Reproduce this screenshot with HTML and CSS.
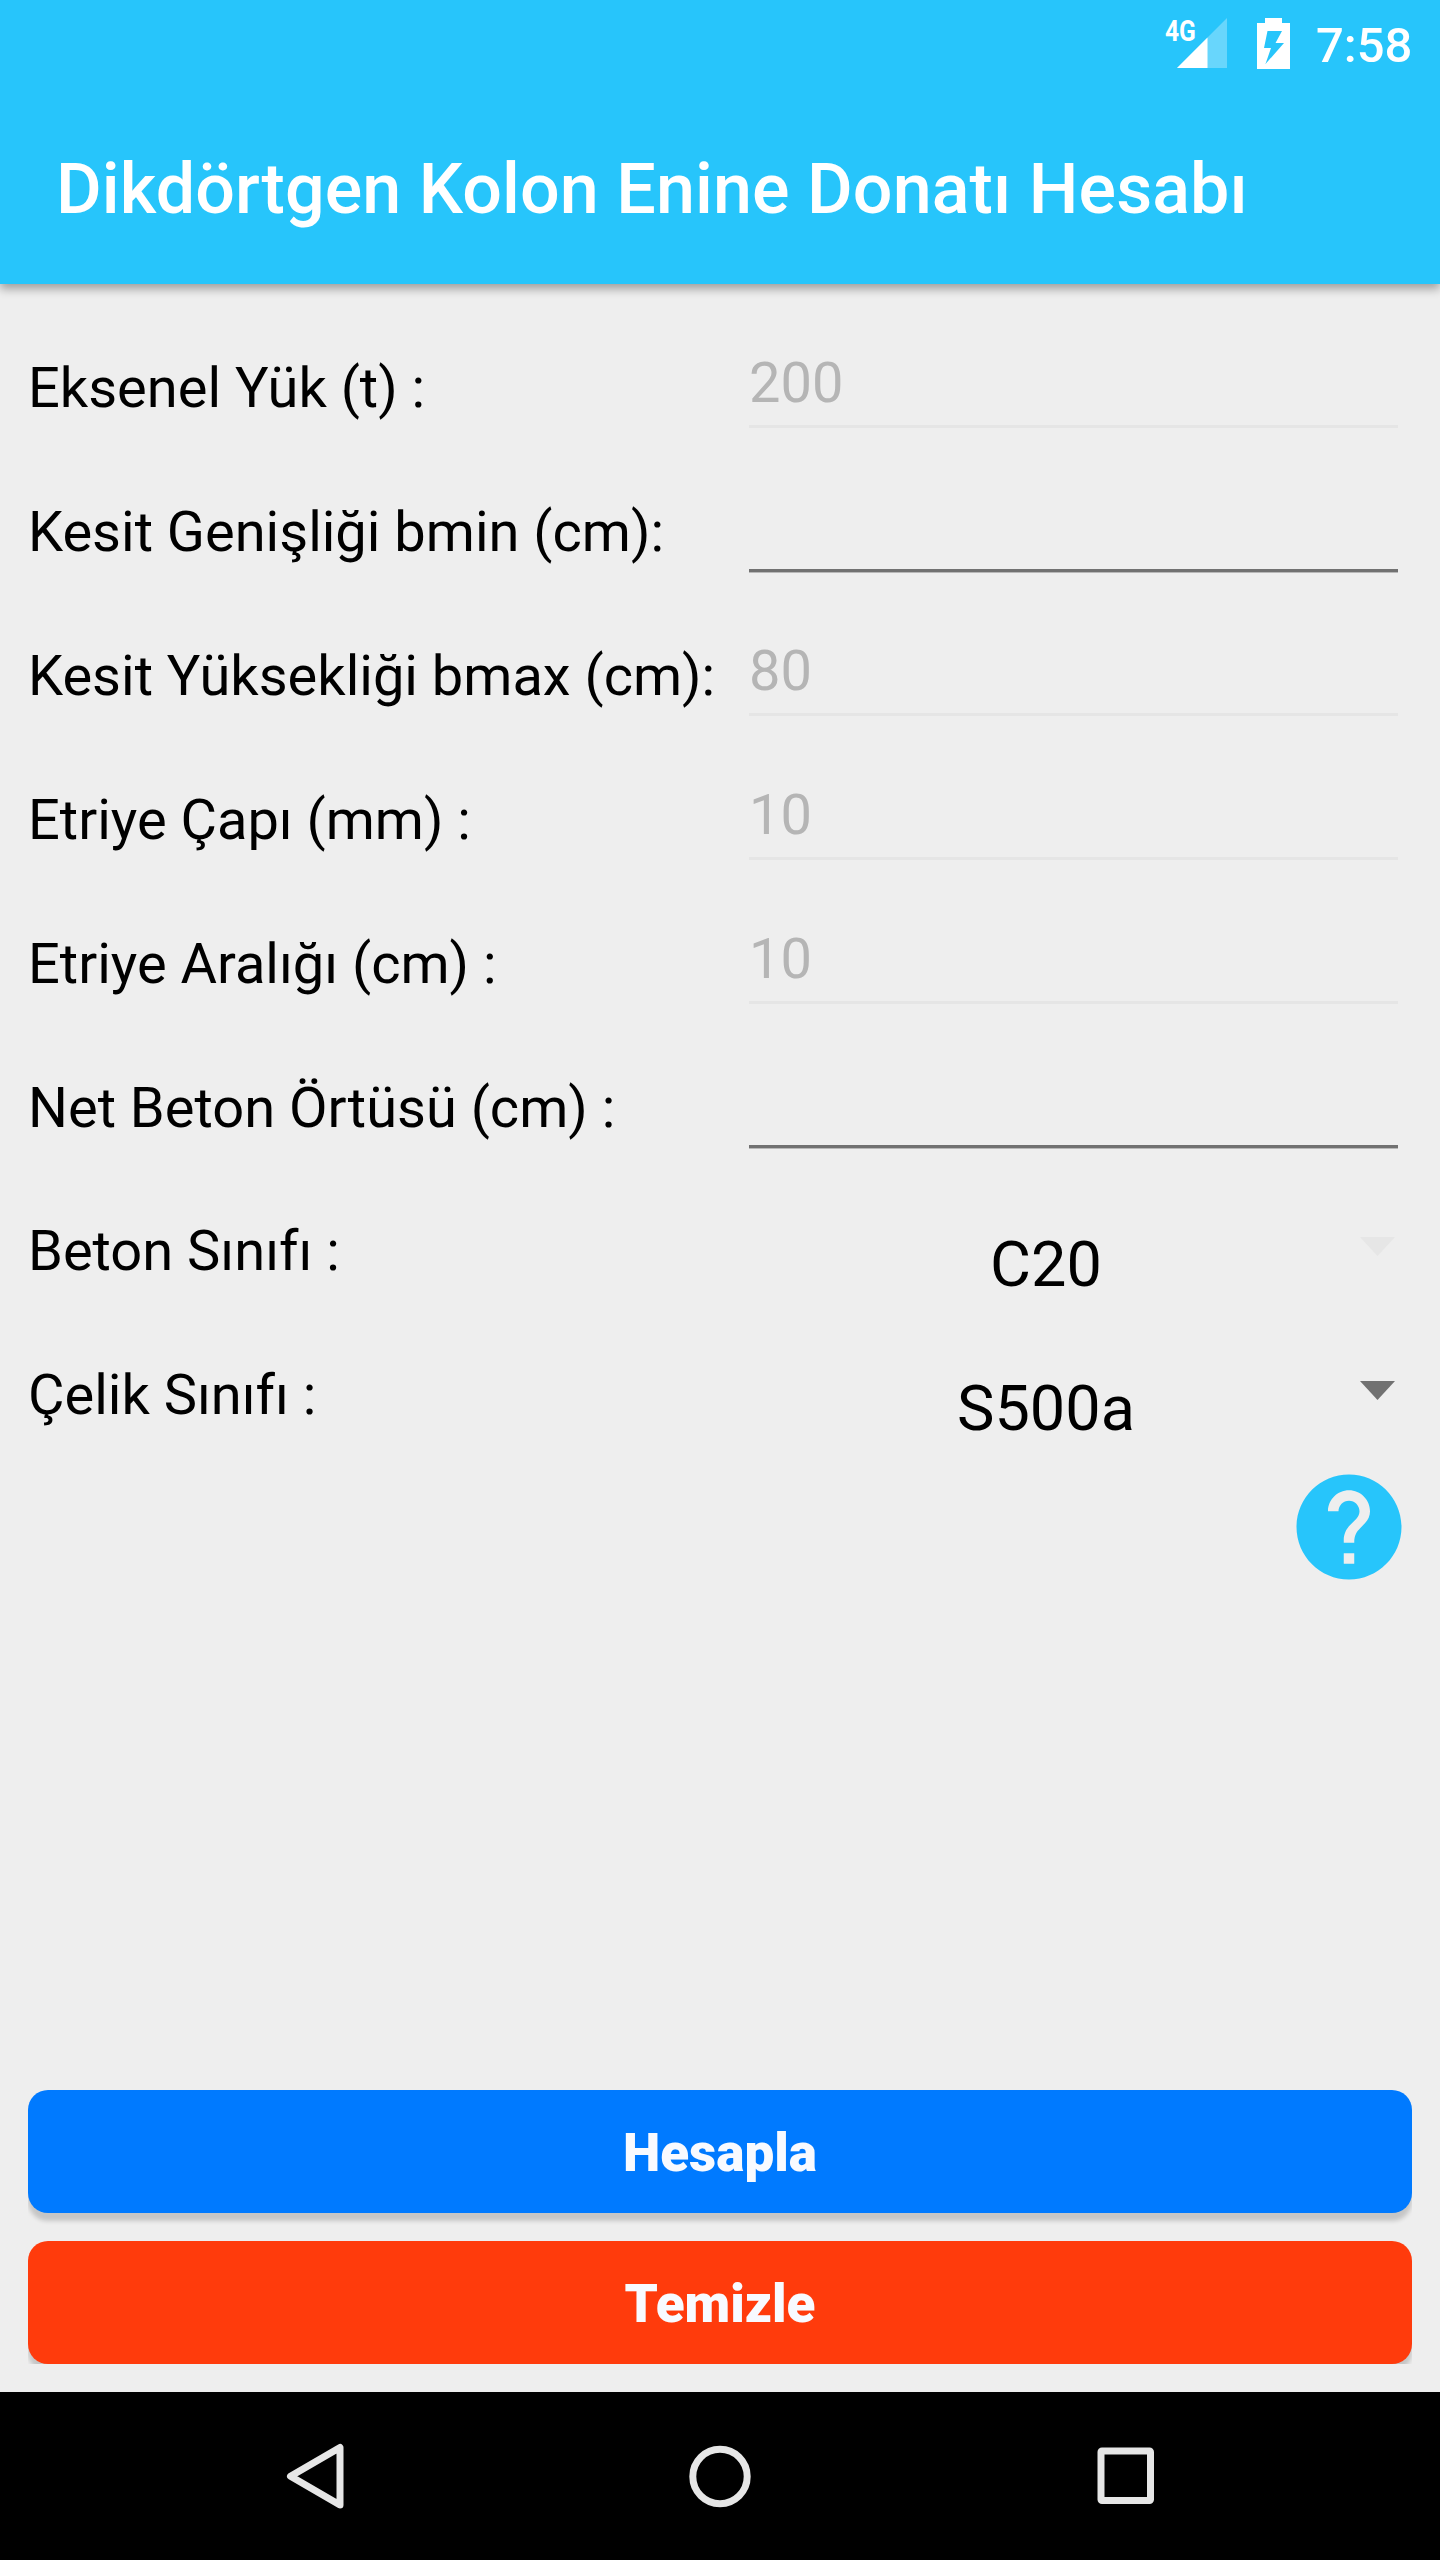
FILE: index.html
```html
<!DOCTYPE html>
<html lang="tr">
<head>
<meta charset="utf-8">
<title>Dikdörtgen Kolon Enine Donatı Hesabı</title>
<link rel="stylesheet" href="styles.css">
</head>
<body>
<div class="screen">
  <header class="header">
    <div class="status">
      <span class="network">4G</span>
      <svg class="signal" width="50" height="50" viewBox="0 0 50 50"><path d="M0 50L50 0V50Z" fill="#fff" fill-opacity=".3"/><path d="M0 50L30.500 19.500V50Z" fill="#fff"/></svg>
      <svg class="battery" width="33" height="51" viewBox="0 0 33 51"><path fill="#fff" fill-rule="evenodd" d="M8 0H25V5H33V51H0V5H8ZM10.500 13L7 30H14L8.500 46L27 25H18.500L25 13Z"/></svg>
      <span class="clock">7:58</span>
    </div>
    <h1 class="title">Dikdörtgen Kolon Enine Donatı Hesabı</h1>
  </header>
  <main class="content">
    <div class="row"><label class="label">Eksenel Yük (t) :</label><div class="field disabled">200</div></div>
    <div class="row"><label class="label">Kesit Genişliği bmin (cm):</label><div class="field"></div></div>
    <div class="row"><label class="label">Kesit Yüksekliği bmax (cm):</label><div class="field disabled">80</div></div>
    <div class="row"><label class="label">Etriye Çapı (mm) :</label><div class="field disabled">10</div></div>
    <div class="row"><label class="label">Etriye Aralığı (cm) :</label><div class="field disabled">10</div></div>
    <div class="row"><label class="label">Net Beton Örtüsü (cm) :</label><div class="field"></div></div>
    <div class="row select-row"><label class="label">Beton Sınıfı :</label><div class="select"><span class="value">C20</span><svg class="arrow faded" width="35" height="19" viewBox="0 0 35 19"><path d="M0 0H35L17.500 19Z"/></svg></div></div>
    <div class="row select-row"><label class="label">Çelik Sınıfı :</label><div class="select"><span class="value">S500a</span><svg class="arrow" width="35" height="19" viewBox="0 0 35 19"><path d="M0 0H35L17.500 19Z"/></svg></div></div>
    <svg class="help" width="126" height="126" viewBox="0 0 24 24"><path fill="#27c5fb" d="M12 2C6.480 2 2 6.480 2 12s4.480 10 10 10 10-4.480 10-10S17.520 2 12 2zm1 17h-2v-2h2v2zm2.070-7.750l-.9.920C13.450 12.900 13 13.500 13 15h-2v-.5c0-1.100.45-2.100 1.170-2.830l1.240-1.260c.37-.36.59-.86.59-1.410 0-1.100-.9-2-2-2s-2 .9-2 2H8c0-2.210 1.790-4 4-4s4 1.790 4 4c0 .88-.36 1.680-.93 2.250z"/></svg>
    <div class="actions">
      <div class="slot"><button class="button primary">Hesapla</button></div>
      <div class="slot clipped"><button class="button danger">Temizle</button></div>
    </div>
  </main>
  <nav class="nav">
    <svg width="66" height="66" viewBox="0 0 66 66"><path d="M59 4.500V62L9.500 33.250Z"/></svg>
    <svg width="66" height="66" viewBox="0 0 66 66"><circle cx="33" cy="33.500" r="27.200"/></svg>
    <svg width="66" height="66" viewBox="0 0 66 66"><rect x="8" y="8" width="49.500" height="49.500" rx="1"/></svg>
  </nav>
</div>
</body>
</html>
```
FILE: styles.css
```css
* { box-sizing: border-box; }

body {
  margin: 0;
  background: #eee;
  color: #000;
  font-family: Roboto, sans-serif;
}

.screen {
  display: flex;
  flex-direction: column;
  width: 1440px;
  height: 2560px;
  overflow: hidden;
}

.header {
  height: 284px;
  background: #27c5fb;
  color: #fff;
  box-shadow: 0 5px 9px rgba(0, 0, 0, .33);
}

.status {
  display: flex;
  align-items: flex-start;
  justify-content: flex-end;
  height: 84px;
  padding-right: 26px;
}

.network {
  width: 12px;
  margin-top: 16px;
  font-size: 30px;
  line-height: 30px;
  font-weight: 700;
  white-space: nowrap;
  transform: scaleX(.82);
  transform-origin: left;
}

.signal { margin-top: 18px; }

.battery { margin: 18px 0 0 30px; }

.clock {
  width: 98px;
  margin: 16px 0 0 26px;
  font-size: 49px;
  line-height: 60px;
  font-weight: 500;
}

.title {
  margin: 0;
  padding: 65px 0 0 56px;
  font-size: 70px;
  line-height: 80px;
  font-weight: 500;
  letter-spacing: .09px;
  white-space: nowrap;
}

.content {
  display: flex;
  flex-direction: column;
  flex: 1;
  padding: 31px 28px 28px;
}

.row {
  display: grid;
  grid-template-columns: 721px 649px;
  height: 144px;
}

.label {
  padding-top: 40px;
  font-size: 56px;
  line-height: 66px;
  white-space: nowrap;
}

.field {
  height: 113px;
  padding-top: 35px;
  border-bottom: 3px solid #717171;
  box-shadow: 0 1px #b8b8b8;
  font-size: 56px;
  line-height: 66px;
}

.field.disabled {
  border-bottom-color: #e5e5e5;
  box-shadow: none;
  color: #b5b5b5;
}

.select-row .label { padding-top: 39px; }

.select {
  display: flex;
  align-items: flex-start;
  justify-content: space-between;
  padding: 49px 3px 0 0;
}

.value {
  flex: 1;
  padding-right: 17px;
  font-size: 63px;
  line-height: 74px;
  text-align: center;
}

.arrow {
  margin-top: 9px;
  fill: #717171;
}

.arrow.faded { fill: #e6e6e6; }

.help {
  align-self: flex-end;
  margin: -3px 0 0;
}

.actions {
  display: flex;
  flex-direction: column;
  gap: 28px;
  margin-top: auto;
}

.slot {
  height: 123px;
  clip-path: inset(-4px 0 -14px);
}

.slot.clipped { clip-path: inset(-4px 0 0); }

.button {
  display: block;
  width: 100%;
  height: 123px;
  padding: 3px 0 0;
  border: 0;
  border-radius: 20px;
  color: #f8faff;
  font-family: Roboto, sans-serif;
  font-size: 53px;
  line-height: 62px;
  font-weight: 900;
  box-shadow: 0 8px 4px rgba(0, 0, 0, .17);
}

.primary { background: #007aff; }
.danger { background: #ff3b0c; }

.nav {
  display: flex;
  align-items: center;
  justify-content: center;
  gap: 340px;
  height: 168px;
  background: #000;
}

.nav svg {
  fill: none;
  stroke: #e6e6e6;
  stroke-width: 7;
  stroke-linejoin: round;
}
```
